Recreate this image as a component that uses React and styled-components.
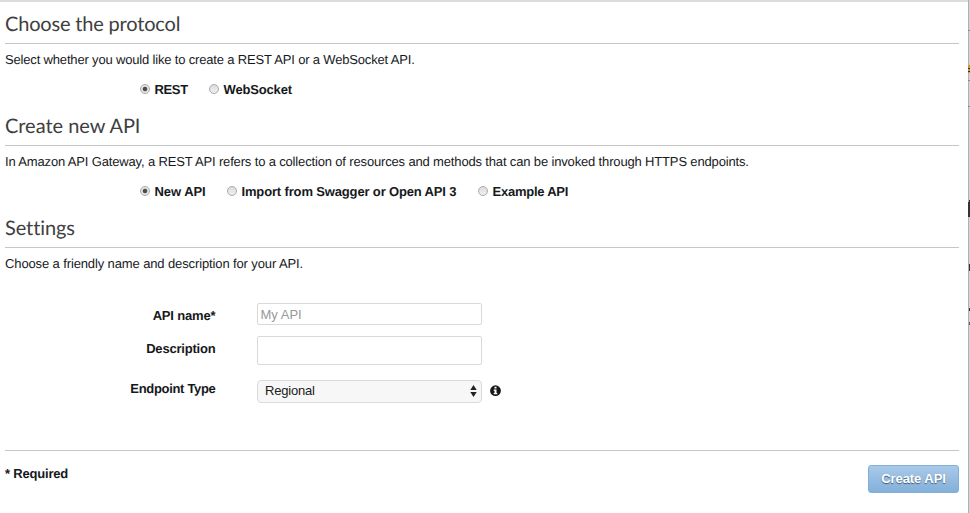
import React from 'react';
import styled, { createGlobalStyle } from 'styled-components';

const GlobalStyle = createGlobalStyle`
  * { box-sizing: border-box; }
  body {
    margin: 0;
    overflow: hidden;
    background: #fff;
    color: #16191c;
    font: 13px/18px "Liberation Sans", Arial, sans-serif;
    text-rendering: geometricPrecision;
  }
`;

const Window = styled.div`
  display: grid;
  grid-template-columns: 968px 2px;
  height: 513px;
`;

const Dialog = styled.main`
  border-top: 2px solid #dcdcdc;
  padding: 0 9px 0 5px;
`;

const Backdrop = styled.svg`
  display: block;
`;

const Section = styled.section`
  height: ${({ $height }) => $height || 102}px;
`;

const Heading = styled.h2`
  margin: 0 0 7px;
  height: 42px;
  border-bottom: 1px solid #c6c6c6;
  color: #404040;
  font: 400 20px/45px Lato, sans-serif;
  font-variant-ligatures: none;
  letter-spacing: ${({ $spacing }) => $spacing || 0}px;
  white-space: nowrap;
`;

const Description = styled.p`
  margin: 0;
  height: 18px;
  white-space: nowrap;
  letter-spacing: ${({ $spacing }) => $spacing || 0}px;
`;

const Options = styled.div`
  display: flex;
  height: 18px;
  margin: 12px 0 0 135px;
`;

const Option = styled.label`
  display: flex;
  align-items: center;
  gap: 4.5px;
  width: ${({ $width }) => $width}px;
  font-weight: 700;
  letter-spacing: ${({ $spacing }) => $spacing || 0}px;
  white-space: nowrap;
`;

const Radio = styled.input`
  appearance: none;
  flex: none;
  width: 10px;
  height: 10px;
  margin: 0 0 2px;
  border: 1px solid #a9a9a9;
  border-radius: 50%;
  background: linear-gradient(#dcdcdc, #f0f0f0);
  &:checked {
    background: radial-gradient(circle, #4c4c4c 0 1.9px, #e6e6e6 2.7px);
  }
`;

const Fields = styled.div`
  display: grid;
  grid-template-columns: 210.5px 41.5px 225px 8px 12px;
  grid-template-rows: 22px 11px 29px 15px 23px;
`;

const Label = styled.label`
  grid-column: 1;
  grid-row: ${({ $row }) => $row};
  height: 18px;
  margin-top: ${({ $top }) => $top}px;
  font-weight: 700;
  text-align: right;
  white-space: nowrap;
  letter-spacing: ${({ $spacing }) => $spacing || 0}px;
`;

const Field = styled.input`
  grid-column: 3;
  grid-row: ${({ $row }) => $row};
  width: 225px;
  height: ${({ $height }) => $height}px;
  padding: 1px 3px 0 2.5px;
  border: 1px solid #d9d9d9;
  border-radius: 2px;
  outline: 0;
  background: #fff;
  font: 13px "Liberation Sans", Arial, sans-serif;
  &::placeholder { color: #999; opacity: 1; }
`;

const Select = styled.button`
  grid-column: 3;
  grid-row: 5;
  display: flex;
  align-items: center;
  justify-content: space-between;
  height: 23px;
  padding: 0 4px 2px 7px;
  border: 1px solid #dadada;
  border-radius: 4px;
  background: #f7f7f7;
  color: #202020;
  font: 13px "Liberation Sans", Arial, sans-serif;
  letter-spacing: -0.2px;
`;

const Info = styled.svg`
  grid-column: 5;
  grid-row: 5;
  margin-top: 5px;
`;

const Footer = styled.footer`
  display: flex;
  justify-content: space-between;
  margin-top: 47px;
  padding-top: 14px;
  border-top: 1px solid #c6c6c6;
`;

const Required = styled.span`
  font-weight: 700;
  letter-spacing: -0.19px;
`;

const Submit = styled.button`
  width: 91px;
  height: 28px;
  padding: 0 0 1px;
  border: 1px solid #83afd9;
  border-radius: 3px;
  background: linear-gradient(#a9c9e8, #82b0da);
  color: #fff;
  font: 700 13px "Liberation Sans", Arial, sans-serif;
  letter-spacing: -0.07px;
  text-shadow: 0 1px 1px #405c76;
`;

function Choice({ name, children, checked, ...style }) {
  return (
    <Option {...style}>
      <Radio type="radio" name={name} defaultChecked={checked} />
      {children}
    </Option>
  );
}

export default function App() {
  return (
    <>
      <GlobalStyle />
      <Window>
        <Dialog>
          <Section>
            <Heading $spacing={-0.18}>Choose the protocol</Heading>
            <Description $spacing={-0.17}>Select whether you would like to create a REST API or a WebSocket API.</Description>
            <Options>
              <Choice name="protocol" $width={69} $spacing={-0.35} checked>REST</Choice>
              <Choice name="protocol" $width={90} $spacing={-0.16}>WebSocket</Choice>
            </Options>
          </Section>
          <Section>
            <Heading $spacing={-0.03}>Create new API</Heading>
            <Description $spacing={-0.155}>In Amazon API Gateway, a REST API refers to a collection of resources and methods that can be invoked through HTTPS endpoints.</Description>
            <Options>
              <Choice name="source" $width={87} $spacing={-0.05} checked>New API</Choice>
              <Choice name="source" $width={251} $spacing={-0.15}>Import from Swagger or Open API 3</Choice>
              <Choice name="source" $width={100} $spacing={-0.24}>Example API</Choice>
            </Options>
          </Section>
          <Section $height={97}>
            <Heading $spacing={-0.09}>Settings</Heading>
            <Description $spacing={-0.12}>Choose a friendly name and description for your API.</Description>
          </Section>
          <Fields>
            <Label $row={1} $top={4} $spacing={-0.16}>API name*</Label>
            <Field $row={1} $height={22} placeholder="My API" />
            <Label $row={3} $top={4} $spacing={-0.2}>Description</Label>
            <Field $row={3} $height={29} />
            <Label $row={5} $spacing={-0.32}>Endpoint Type</Label>
            <Select type="button">
              Regional
              <svg width="7" height="12" viewBox="0 0 7 12" fill="#222"><path d="M3.5 0 6.7 5H.3zM.3 7h6.4l-3.2 5z" /></svg>
            </Select>
            <Info width="12" height="12" viewBox="0 0 12 12">
              <circle cx="5.5" cy="5.7" r="5.4" fill="#16191c" />
              <path fill="#fff" d="M4.5 1.8h2v1.6h-2zM3.7 4.5h2.8v3.6h.8v1.2H3.7V8.1h.8V5.7h-.8z" />
            </Info>
          </Fields>
          <Footer>
            <Required>* Required</Required>
            <Submit type="button">Create API</Submit>
          </Footer>
        </Dialog>
        <Backdrop width="2" height="513" viewBox="0 0 2 513" shapeRendering="crispEdges">
          <path fill="#b0b0b0" d="M0 0h1v513H0z" />
          <path fill="#d5d5d5" d="M1 0h1v513H1z" />
          <path fill="#888" d="M0 30h2v1H0zM0 80h2v1H0zM0 106h2v1H0z" />
          <path fill="#c89b31" d="M0 65h2v8H0z" />
          <path fill="#333" d="M0 68h2v1H0zM0 71h2v1H0zM1 200h1v2H1zM0 202h2v15H0zM1 264h1v7H1zM1 308h1v3H1z" />
          <path fill="#5b5b91" d="M1 322h1v3H1z" />
        </Backdrop>
      </Window>
    </>
  );
}
